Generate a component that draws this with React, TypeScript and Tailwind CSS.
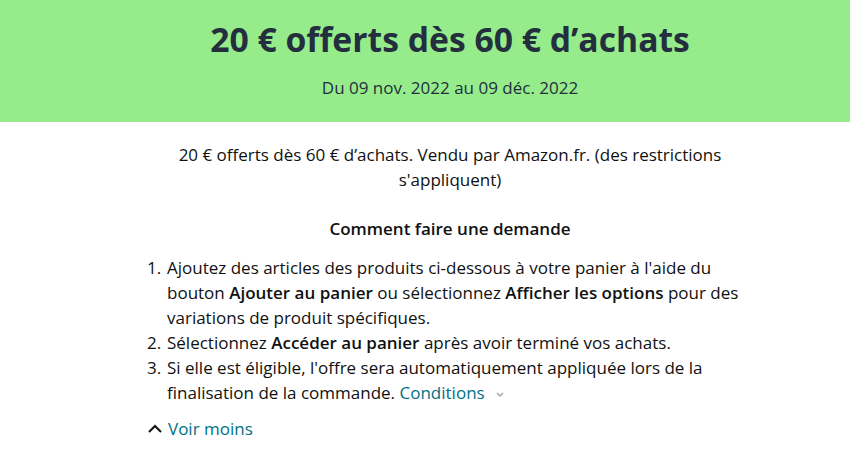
import React from "react";

export default function App() {
  return (
    <div className="w-[850px] h-[473px] bg-white overflow-hidden text-[#0f1111]" style={{ fontFamily: '"Open Sans", Arial, sans-serif' }}>
      <div className="h-[122px] bg-[#96ec8a] flex flex-col items-center pl-[50px] pt-[16px]">
        <h1 className="text-[33.7px] leading-[46px] font-bold text-[#232f3e]">20 € offerts dès 60 € d’achats</h1>
        <p className="mt-[14px] text-[17px] leading-[24px] text-[#232f3e]">Du 09 nov. 2022 au 09 déc. 2022</p>
      </div>
      <div className="ml-[145px] w-[610px] pt-[20px]">
        <p className="text-center text-[17px] leading-[25px]">
          20 € offerts dès 60 € d’achats. Vendu par Amazon.fr. (des restrictions s'appliquent)
        </p>
        <p className="mt-[24px] text-center text-[17px] leading-[25px] font-semibold">Comment faire une demande</p>
        <ol className="mt-[14px] pl-[2px] text-[17px] leading-[25px]">
          <li className="flex">
            <span className="w-[20px] shrink-0">1.</span>
            <span>Ajoutez des articles des produits ci-dessous à votre panier à l'aide du bouton <span className="font-semibold">Ajouter au panier</span> ou sélectionnez <span className="font-semibold">Afficher les options</span> pour des variations de produit spécifiques.</span>
          </li>
          <li className="flex">
            <span className="w-[20px] shrink-0">2.</span>
            <span>Sélectionnez <span className="font-semibold">Accéder au panier</span> après avoir terminé vos achats.</span>
          </li>
          <li className="flex">
            <span className="w-[20px] shrink-0">3.</span>
            <span>
              Si elle est éligible, l'offre sera automatiquement appliquée lors de la finalisation de la commande. <span className="text-[#007185]">Conditions</span>
              <svg className="inline-block ml-[10px] align-middle" width="10" height="8" viewBox="0 0 10 8"><path d="M2 3l3 3 3-3" fill="none" stroke="#9aa3a5" strokeWidth="1.3" /></svg>
            </span>
          </li>
        </ol>
        <div className="mt-[11px] flex items-center text-[17px] leading-[25px]">
          <svg width="16" height="10" viewBox="0 0 16 10" className="ml-[2px] mr-[5px]"><path d="M2 8l6-6 6 6" fill="none" stroke="#0f1111" strokeWidth="2" /></svg>
          <span className="text-[#007185]">Voir moins</span>
        </div>
      </div>
    </div>
  );
}
